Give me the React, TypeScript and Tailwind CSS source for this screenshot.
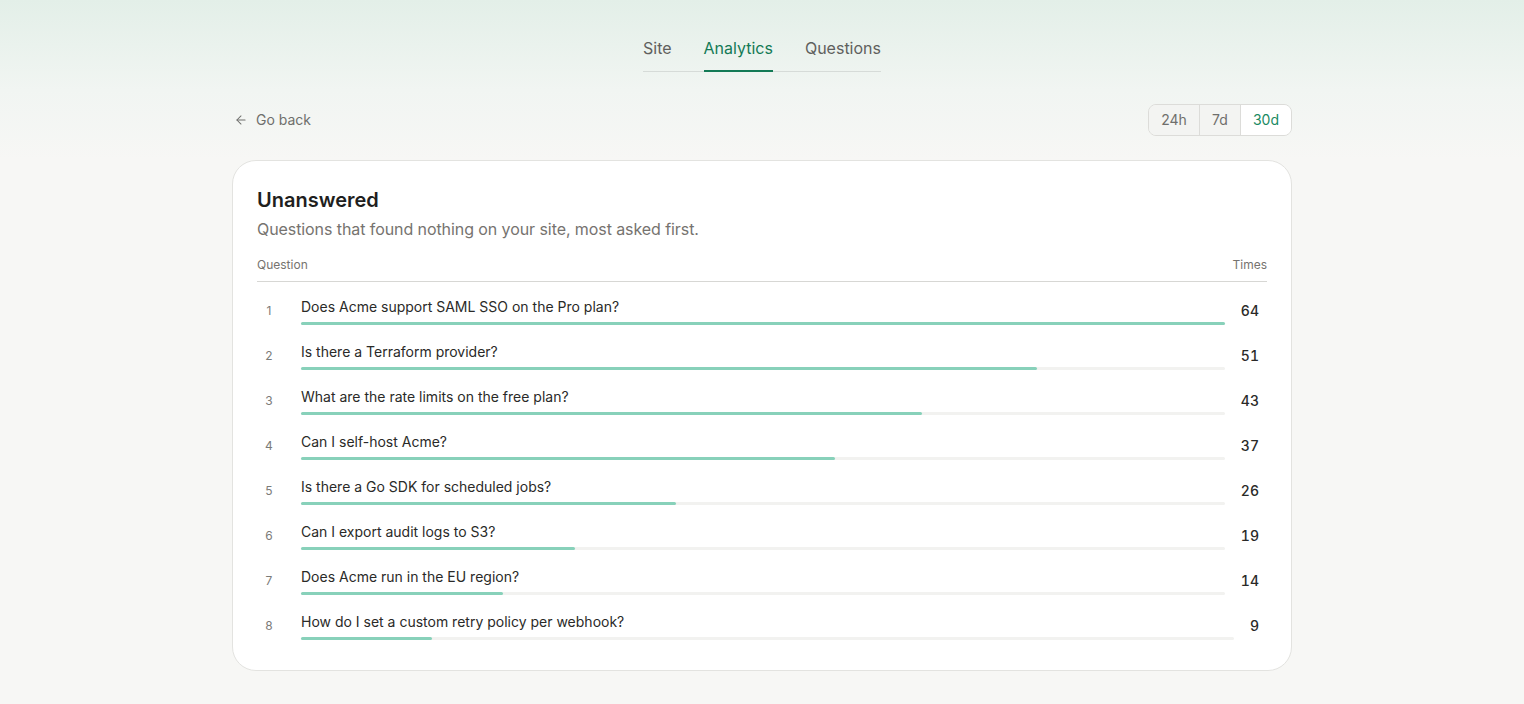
import { ArrowLeft } from 'lucide-react'

// Página de análise: perguntas sem resposta, mais perguntadas primeiro.
const perguntas = [
  { q: 'Does Acme support SAML SSO on the Pro plan?', n: 64 },
  { q: 'Is there a Terraform provider?', n: 51 },
  { q: 'What are the rate limits on the free plan?', n: 43 },
  { q: 'Can I self-host Acme?', n: 37 },
  { q: 'Is there a Go SDK for scheduled jobs?', n: 26 },
  { q: 'Can I export audit logs to S3?', n: 19 },
  { q: 'Does Acme run in the EU region?', n: 14 },
  { q: 'How do I set a custom retry policy per webhook?', n: 9 },
]

const max = Math.max(...perguntas.map((p) => p.n))

export default function App() {
  return (
    <div
      className="min-h-[704px] bg-[linear-gradient(180deg,#e3efe8_0px,#f1f5f2_90px,#f7f7f5_160px,#f7f7f5_100%)] pt-9 pb-8"
      style={{ fontFamily: 'Inter, "Noto Sans", sans-serif' }}
    >
      {/* Abas */}
      <nav className="flex justify-center">
        <div className="flex gap-8 border-b border-[#d6dbd8]">
          <a className="pb-[11px] text-base leading-6 text-[#5f605d]">Site</a>
          <a className="-mb-px border-b-2 border-[#137a56] pb-[10px] text-base leading-6 text-[#137a56]">
            Analytics
          </a>
          <a className="pb-[11px] text-base leading-6 text-[#5f605d]">Questions</a>
        </div>
      </nav>

      <div className="mx-auto w-[1060px]">
        <div className="mt-8 flex items-center justify-between">
          <a className="flex items-center gap-2 pl-0.5 text-sm text-[#6f6f6c]">
            <ArrowLeft size={14} strokeWidth={1.75} />
            <span>Go back</span>
          </a>
          <div className="flex h-8 overflow-hidden rounded-lg border border-[#dcdcd9] text-sm">
            <button className="w-[50px] bg-[#f3f4f2] text-[#6f6f6c]">24h</button>
            <button className="w-[41px] border-l border-[#dcdcd9] bg-[#f3f4f2] text-[#6f6f6c]">7d</button>
            <button className="w-[51px] border-l border-[#dcdcd9] bg-white text-[#1b8a63]">30d</button>
          </div>
        </div>

        {/* Cartão */}
        <section className="mt-6 rounded-3xl border border-[#e3e3e0] bg-white px-6 pt-[25px] pb-[22px]">
          <h2 className="text-xl leading-7 font-semibold text-[#1f1f1e]">Unanswered</h2>
          <p className="mt-[3px] text-base leading-6 tracking-[-0.005em] text-[#76736f]">
            Questions that found nothing on your site, most asked first.
          </p>

          <div className="mt-4 flex justify-between border-b border-[#d7d7d4] pb-2 text-xs leading-4 text-[#76736f]">
            <span>Question</span>
            <span>Times</span>
          </div>

          <ul className="pt-[6px]">
            {perguntas.map((p, i) => (
              <li key={p.q} className="flex h-[45px] items-center">
                <span className="w-6 text-center text-xs text-[#7b7b78]">{i + 1}</span>
                <div className="ml-5 flex-1">
                  <div className="text-sm leading-5 text-[#2a2a28]">{p.q}</div>
                  <div className="mt-[5px] h-[3px] rounded-full bg-[#f2f2f0]">
                    <div
                      className="h-[3px] rounded-full bg-[#88d1ba]"
                      style={{ width: `${(p.n / max) * 100}%` }}
                    />
                  </div>
                </div>
                <span className="ml-4 pr-2 text-right text-sm font-medium tabular-nums text-[#2a2a28]">
                  {p.n}
                </span>
              </li>
            ))}
          </ul>
        </section>
      </div>
    </div>
  )
}
